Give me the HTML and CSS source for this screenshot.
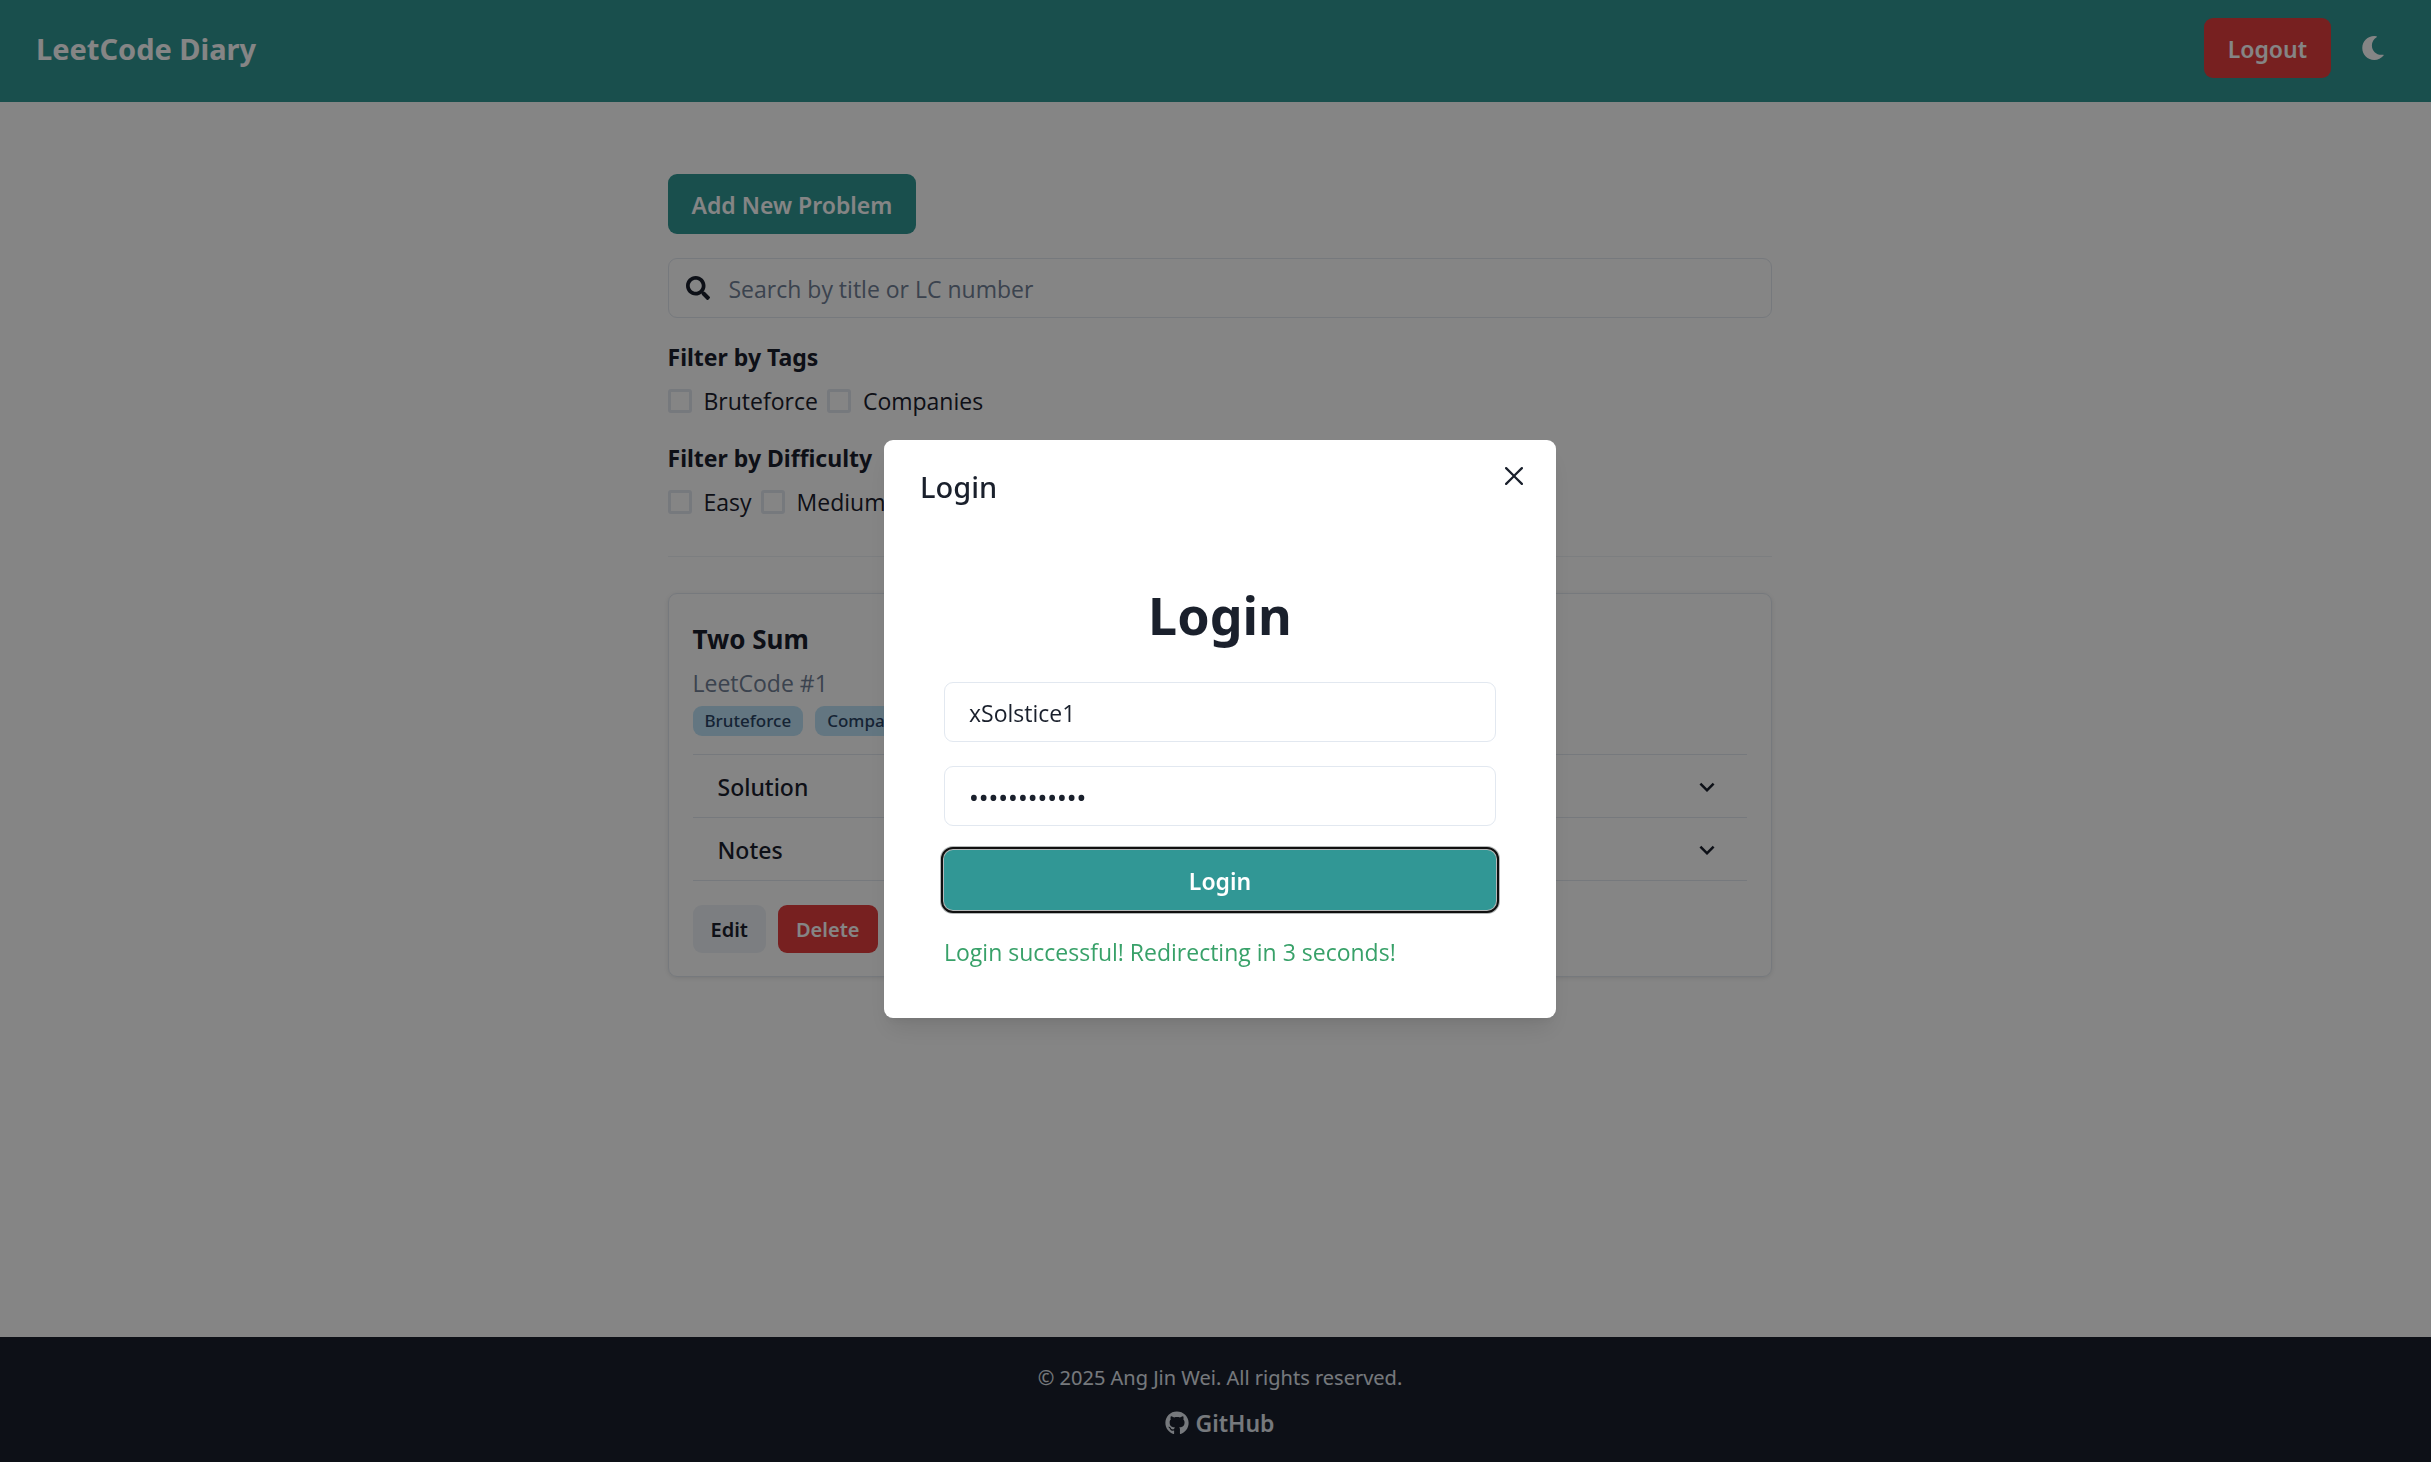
FILE: index.html
```html
<!DOCTYPE html>
<html lang="en">
<head>
<meta charset="utf-8">
<meta name="viewport" content="width=device-width, initial-scale=1">
<title>LeetCode Diary</title>
<link rel="stylesheet" href="styles.css">
</head>
<body>
<div class="page">
  <header class="topbar">
    <h1 class="brand">LeetCode Diary</h1>
    <div class="topbar-actions">
      <button class="btn btn-danger" type="button">Logout</button>
      <button class="btn btn-icon" type="button" aria-label="Toggle dark mode">
        <svg class="icon-moon" viewBox="0 0 512 512" aria-hidden="true"><path fill="currentColor" d="M283.211 512c78.962 0 151.079-35.925 198.857-94.792 7.068-8.708-.639-21.430-11.562-19.350-124.203 23.654-238.262-71.576-238.262-196.954 0-72.222 38.662-138.635 101.498-174.394 9.686-5.512 7.250-20.197-3.756-22.230A258.156 258.156 0 0 0 283.211 0c-141.309 0-256 114.511-256 256 0 141.309 114.511 256 256 256z"/></svg>
      </button>
    </div>
  </header>

  <main class="content">
    <button class="btn btn-primary add" type="button">Add New Problem</button>
    <div class="search">
      <svg class="icon-search" viewBox="0 0 512 512" aria-hidden="true"><path fill="currentColor" d="M505 442.700L405.300 343c-4.500-4.500-10.600-7-17-7H372c27.600-35.300 44-79.700 44-128C416 93.100 322.900 0 208 0S0 93.100 0 208s93.100 208 208 208c48.300 0 92.700-16.400 128-44v16.300c0 6.400 2.500 12.500 7 17l99.700 99.700c9.400 9.400 24.600 9.400 33.900 0l28.300-28.300c9.400-9.400 9.400-24.600.1-34zM208 336c-70.700 0-128-57.200-128-128 0-70.700 57.200-128 128-128 70.700 0 128 57.200 128 128 0 70.700-57.200 128-128 128z"/></svg>
      <input class="search-input" type="text" placeholder="Search by title or LC number" aria-label="Search by title or LC number">
    </div>
    <fieldset class="filter">
      <legend class="filter-title">Filter by Tags</legend>
      <div class="filter-options">
        <label class="check"><input type="checkbox">Bruteforce</label>
        <label class="check"><input type="checkbox">Companies</label>
      </div>
    </fieldset>
    <fieldset class="filter">
      <legend class="filter-title">Filter by Difficulty</legend>
      <div class="filter-options">
        <label class="check"><input type="checkbox">Easy</label>
        <label class="check"><input type="checkbox">Medium</label>
      </div>
    </fieldset>
    <hr class="divider">
    <article class="card">
      <h2 class="card-title">Two Sum</h2>
      <p class="card-number">LeetCode #1</p>
      <div class="tags">
        <span class="tag">Bruteforce</span>
        <span class="tag">Companies</span>
      </div>
      <div class="accordion">
        <button class="accordion-row" type="button" aria-expanded="false">Solution
          <svg class="icon-chevron" viewBox="0 0 24 24" aria-hidden="true"><path fill="currentColor" d="M16.590 8.590L12 13.170 7.410 8.590 6 10l6 6 6-6z"/></svg>
        </button>
        <button class="accordion-row" type="button" aria-expanded="false">Notes
          <svg class="icon-chevron" viewBox="0 0 24 24" aria-hidden="true"><path fill="currentColor" d="M16.590 8.590L12 13.170 7.410 8.590 6 10l6 6 6-6z"/></svg>
        </button>
      </div>
      <div class="card-actions">
        <button class="btn btn-small btn-muted" type="button">Edit</button>
        <button class="btn btn-small btn-danger" type="button">Delete</button>
      </div>
    </article>
  </main>

  <footer class="footer">
    <p class="copyright">© 2025 Ang Jin Wei. All rights reserved.</p>
    <a class="github" href="#">
      <svg class="icon-github" viewBox="0 0 496 512" aria-hidden="true"><path fill="currentColor" d="M165.900 397.400c0 2-2.300 3.600-5.200 3.600-3.300.3-5.600-1.300-5.600-3.600 0-2 2.300-3.600 5.200-3.600 3-.3 5.600 1.300 5.600 3.600zM244.800 8C106.100 8 0 113.300 0 252c0 110.900 69.800 205.800 169.500 239.200 12.800 2.300 17.300-5.600 17.300-12.100 0-6.200-.3-40.400-.3-61.400 0 0-70 15-84.700-29.800 0 0-11.400-29.100-27.800-36.600 0 0-22.900-15.700 1.600-15.400 0 0 24.900 2 38.600 25.800 21.900 38.600 58.600 27.500 72.900 20.900 2.300-16 8.800-27.100 16-33.700-55.900-6.200-112.300-14.300-112.300-110.500 0-27.500 7.600-41.300 23.600-58.900-2.600-6.500-11.100-33.300 2.600-67.900 20.900-6.500 69 27 69 27 20-5.600 41.500-8.500 62.800-8.500s42.800 2.900 62.800 8.500c0 0 48.100-33.600 69-27 13.700 34.700 5.200 61.400 2.600 67.900 16 17.700 25.800 31.500 25.800 58.900 0 96.500-58.900 104.200-114.800 110.500 9.200 7.900 17 22.900 17 46.400 0 33.700-.3 75.400-.3 83.600 0 6.500 4.600 14.400 17.300 12.100C428.200 457.800 496 362.900 496 252 496 113.300 383.500 8 244.800 8z"/></svg>
      GitHub
    </a>
  </footer>
</div>

<div class="overlay">
  <section class="modal" role="dialog" aria-modal="true" aria-labelledby="modal-title">
    <header class="modal-header">
      <h2 class="modal-title" id="modal-title">Login</h2>
      <button class="close" type="button" aria-label="Close">
        <svg class="icon-close" viewBox="0 0 24 24" aria-hidden="true"><path fill="currentColor" d="M.439 21.440a1.500 1.500 0 0 0 2.122 2.121l9.262-9.261a.25.25 0 0 1 .354 0l9.262 9.263a1.500 1.500 0 1 0 2.122-2.121L14.300 12.177a.25.25 0 0 1 0-.354l9.263-9.262A1.500 1.500 0 0 0 21.439.440L12.177 9.700a.25.25 0 0 1-.354 0L2.561.440A1.500 1.500 0 0 0 .439 2.561L9.700 11.823a.25.25 0 0 1 0 .354z"/></svg>
      </button>
    </header>
    <form class="login-form">
      <h3 class="login-heading">Login</h3>
      <input class="field" type="text" value="xSolstice1" aria-label="Username">
      <input class="field field-password" type="password" value="abcdefghijkl" aria-label="Password">
      <button class="btn btn-primary btn-focused" type="button">Login</button>
      <p class="success" role="status">Login successful! Redirecting in 3 seconds!</p>
    </form>
  </section>
</div>
</body>
</html>
```
FILE: styles.css
```css
:root {
  --ink: #1a202c;
  --line: #e2e8f0;
  --teal: #319795;
  --red: #e53e3e;
  --text: 23px;
  --edge: 9px;
  --font-body: "Open Sans", "Noto Sans", sans-serif;
  --font-strong: "Noto Sans", "Open Sans", sans-serif;
}

* { box-sizing: border-box; }

body, h1, h2, h3, p, fieldset, legend {
  margin: 0;
  padding: 0;
  border: 0;
}

body {
  font-family: var(--font-body);
  font-size: var(--text);
  line-height: 36px;
  color: var(--ink);
  background: #fff;
}

h1, h2, h3, legend { font-family: var(--font-strong); }

button, input { font: inherit; color: inherit; }
button {
  border: 0;
  background: none;
  padding: 0;
  font-family: var(--font-strong);
  cursor: pointer;
}

.page {
  display: flex;
  flex-direction: column;
  min-height: 100vh;
}

.btn {
  height: 60px;
  padding: 2px 24px 0;
  border-radius: 9px;
  font-weight: 600;
}
.btn-primary { background: var(--teal); color: #fff; }
.btn-danger { background: var(--red); color: #fff; }
.btn-muted { background: #edf2f7; }
.btn-icon {
  display: grid;
  place-items: center;
  width: 60px;
  padding: 0;
  color: #fff;
}
.btn-small {
  height: 48px;
  padding: 2px 18px 0;
  font-size: 20px;
}

.topbar {
  display: flex;
  justify-content: space-between;
  align-items: center;
  padding: 18px 28px 24px 36px;
  background: var(--teal);
  color: #fff;
}
.brand { font-size: 29px; font-weight: 700; padding-top: 2px; }
.topbar-actions { display: flex; gap: 12px; }
.icon-moon { width: 24px; height: 24px; }

.content {
  flex: 1;
  display: flex;
  flex-direction: column;
  width: 100%;
  max-width: 1152px;
  margin: 0 auto;
  padding: 72px 20px 0 28px;
}
.add { align-self: flex-start; margin-bottom: 24px; }

.search {
  display: flex;
  align-items: center;
  height: 60px;
  padding-left: 17px;
  gap: 19px;
  border: 1px solid var(--line);
  border-radius: 9px;
  margin-bottom: 21px;
}
.icon-search { width: 24px; height: 24px; }
.search-input {
  flex: 1;
  border: 0;
  outline: 0;
  padding: 2px 0 0;
  background: none;
}
.search-input::placeholder { color: #718096; opacity: 1; }

.filter { margin-bottom: 21px; }
.filter-title { font-weight: 700; margin-bottom: 8px; }
.filter-options { display: flex; gap: 9px; }
.check { display: flex; align-items: center; gap: 12px; }
.check input {
  appearance: none;
  width: 24px;
  height: 24px;
  margin: 0;
  border: 3px solid var(--line);
  border-radius: 3px;
}

.divider {
  width: 100%;
  height: 1px;
  margin: 15px 0 36px;
  border: 0;
  background: var(--line);
  opacity: 0.6;
}

.card {
  padding: 23px 24px;
  border: 1px solid var(--line);
  border-radius: 9px;
  box-shadow: 0 1px 4px rgba(0, 0, 0, 0.1);
}
.card-title { font-size: 26px; font-weight: 700; margin: 4px 0 8px; }
.card-number { color: #718096; }
.tags { display: flex; gap: 12px; margin: 5px 0 18px; }
.tag {
  padding: 0 12px;
  border-radius: 9px;
  background: #bee3f8;
  color: #2a4365;
  font-family: var(--font-strong);
  font-size: 17px;
  line-height: 30px;
  font-weight: 500;
}
.accordion { border-bottom: 1px solid var(--line); margin-bottom: 24px; }
.accordion-row {
  display: flex;
  justify-content: space-between;
  align-items: center;
  width: 100%;
  height: 63px;
  padding: 1px 25px 0;
  border-top: 1px solid var(--line);
  font-weight: 500;
}
.icon-chevron { width: 30px; height: 30px; }
.card-actions { display: flex; gap: 12px; }

.footer {
  display: flex;
  flex-direction: column;
  align-items: center;
  gap: 11px;
  padding: 24px 0 21px var(--edge);
  background: var(--ink);
  color: var(--line);
}
.copyright { font-family: var(--font-strong); font-size: 20px; line-height: 33px; }
.github {
  display: flex;
  align-items: center;
  gap: 6px;
  font-family: var(--font-strong);
  font-weight: 600;
  color: inherit;
  text-decoration: none;
}
.icon-github { width: 24px; height: 24px; }

.overlay {
  position: fixed;
  inset: 0;
  display: flex;
  justify-content: center;
  align-items: center;
  padding: 0 0 4px var(--edge);
  background: rgba(0, 0, 0, 0.48);
}
.modal {
  width: 100%;
  max-width: 672px;
  border-radius: 9px;
  background: #fff;
  box-shadow: 0 15px 23px -5px rgba(0, 0, 0, 0.1), 0 6px 9px -3px rgba(0, 0, 0, 0.05);
}
.modal-header {
  display: flex;
  justify-content: space-between;
  padding: 12px 18px 0 36px;
}
.modal-title { font-size: 29px; font-weight: 500; padding-top: 17px; }
.close {
  display: grid;
  place-items: center;
  width: 48px;
  height: 48px;
}
.icon-close { width: 18px; height: 18px; }

.login-form {
  display: flex;
  flex-direction: column;
  gap: 24px;
  padding: 78px 60px 48px;
}
.login-heading {
  margin-bottom: 11px;
  font-size: 52px;
  line-height: 64px;
  font-weight: 700;
  text-align: center;
}
.field {
  width: 100%;
  height: 60px;
  padding: 2px 24px 0;
  border: 1px solid var(--line);
  border-radius: 9px;
  background: #fff;
}
.field-password { font-family: var(--font-strong); font-size: 26px; }
.btn-focused {
  outline: 2px solid #101010;
  outline-offset: 1px;
  box-shadow: 0 0 0 4px #b4b8b8;
}
.success { color: #38a169; }
```
